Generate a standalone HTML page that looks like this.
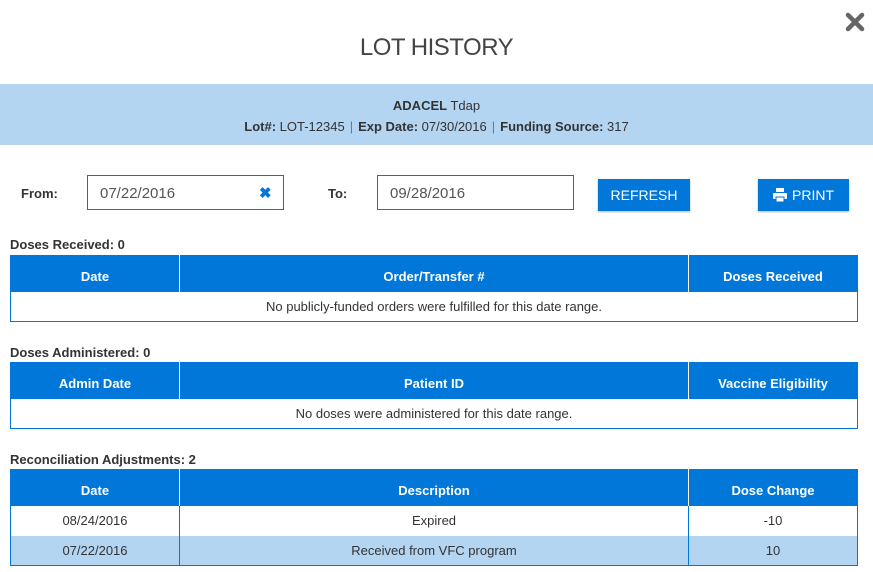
<!DOCTYPE html>
<html><head><style>
*{margin:0;padding:0;box-sizing:border-box}
body{width:873px;height:572px;background:#fff;font-family:"Liberation Sans",sans-serif;color:#333;position:relative;overflow:hidden;font-size:13px}
.a{position:absolute}
h1{position:absolute;top:34px;left:0;width:873px;text-align:center;font-weight:normal;font-size:24px;color:#444;letter-spacing:-0.5px}
.band{top:84px;left:0;width:873px;height:61px;background:#b3d5f2;text-align:center;font-size:13px}
.band div{line-height:21px}
.sep{color:#777;margin:0 5px}
.lbl{font-size:13px;font-weight:bold;color:#333}
.inp{border:1px solid #0077d9;height:35px;font-size:15px;color:#555;padding:9px 12px 0}
.btn{background:#0077d9;color:#fff;font-size:14px;text-align:center;line-height:32px;height:32px;box-shadow:0 1px 2px rgba(0,0,0,.3)}
table{position:absolute;left:10px;width:848px;border-collapse:collapse;border:1px solid #0077d9;font-size:13px}
th{background:#0077d9;color:#fff;height:36px;padding-top:5px;font-weight:bold;border-left:1px solid #fff}
th:first-child{border-left:none}
td{height:30px;text-align:center;border-left:1px solid #0077d9}
td:first-child{border-left:none}
tr.b td{background:#b3d5f2}
</style></head><body>
<h1>LOT HISTORY</h1>
<svg class="a" style="left:845px;top:12px" width="20" height="20" viewBox="0 0 20 20"><path d="M3 3L17 17M17 3L3 17" stroke="#666" stroke-width="4.5" stroke-linecap="round"/></svg>
<div class="a band"><div style="margin-top:11px"><b>ADACEL</b> Tdap</div><div><b>Lot#:</b> LOT-12345<span class="sep">|</span><b>Exp Date:</b> 07/30/2016<span class="sep">|</span><b>Funding Source:</b> 317</div></div>
<div class="a lbl" style="left:21px;top:186px">From:</div>
<div class="a inp" style="left:87px;top:175px;width:197px">07/22/2016</div>
<div class="a" style="left:259px;top:184px;color:#0077d9;font-weight:bold;font-size:15px">✖</div>
<div class="a lbl" style="left:328px;top:186px">To:</div>
<div class="a inp" style="left:377px;top:175px;width:197px">09/28/2016</div>
<div class="a btn" style="left:598px;top:179px;width:92px">REFRESH</div>
<div class="a btn" style="left:758px;top:179px;width:91px"><svg width="14" height="14" viewBox="0 0 14 14" style="vertical-align:-2px;margin-right:5px"><rect x="3" y="0" width="8" height="4" fill="#fff"/><rect x="0" y="5" width="14" height="6" rx="1" fill="#fff"/><rect x="3" y="9" width="8" height="5" fill="#fff" stroke="#0077d9" stroke-width="1"/></svg>PRINT</div>
<div class="a lbl" style="left:10px;top:237px">Doses Received: 0</div>
<table style="top:255px"><tr><th style="width:169px">Date</th><th style="width:509px">Order/Transfer #</th><th>Doses Received</th></tr>
<tr><td colspan="3">No publicly-funded orders were fulfilled for this date range.</td></tr></table>
<div class="a lbl" style="left:10px;top:345px">Doses Administered: 0</div>
<table style="top:362px"><tr><th style="width:169px">Admin Date</th><th style="width:509px">Patient ID</th><th>Vaccine Eligibility</th></tr>
<tr><td colspan="3">No doses were administered for this date range.</td></tr></table>
<div class="a lbl" style="left:10px;top:452px">Reconciliation Adjustments: 2</div>
<table style="top:469px"><tr><th style="width:169px">Date</th><th style="width:509px">Description</th><th>Dose Change</th></tr>
<tr><td>08/24/2016</td><td>Expired</td><td>-10</td></tr>
<tr class="b"><td>07/22/2016</td><td>Received from VFC program</td><td>10</td></tr></table>
</body></html>
